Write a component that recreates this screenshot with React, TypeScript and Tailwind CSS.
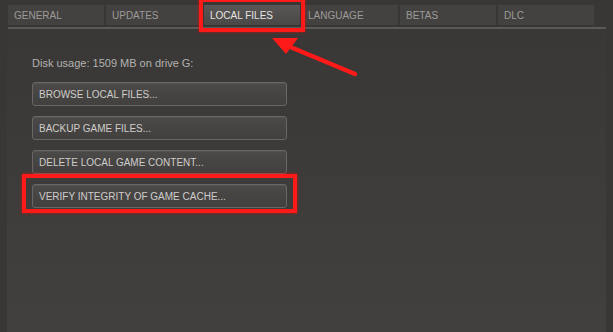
import React from "react";

const tabs = ["GENERAL", "UPDATES", "LOCAL FILES", "LANGUAGE", "BETAS", "DLC"];
const buttons = [
  "BROWSE LOCAL FILES...",
  "BACKUP GAME FILES...",
  "DELETE LOCAL GAME CONTENT...",
  "VERIFY INTEGRITY OF GAME CACHE...",
];

export default function App() {
  return (
    <div
      className="relative w-[613px] h-[332px] overflow-hidden bg-[#383735] text-[11px]"
      style={{ fontFamily: '"Liberation Sans", Arial, sans-serif' }}
    >
      <div className="flex flex-col h-full pt-[5px] pl-[8px] pr-[7px]">
        <div className="flex gap-[2px]">
          {tabs.map((t, i) => (
            <div
              key={t}
              className={
                "w-[96px] h-[20px] flex items-center pl-[6px] text-[10px] " +
                (i === 2
                  ? "bg-gradient-to-b from-[#5a5856] to-[#4a4846] text-[#e6e4e2]"
                  : "bg-[#444240] text-[#9c9a98]")
              }
            >
              {t}
            </div>
          ))}
        </div>
        <div className="h-[2px] mt-[2px] bg-[#5c5a58]" />
        <div className="flex-1 -ml-[1px] bg-gradient-to-b from-[#393836] to-[#41403e] flex flex-col pl-[25px] pt-[27px]">
          <div className="text-[#b4b2b0] h-[14px] leading-[14px]">Disk usage: 1509 MB on drive G:</div>
          <div className="flex flex-col gap-[10px] mt-[12px]">
            {buttons.map((b) => (
              <div
                key={b}
                className="w-[255px] h-[24px] rounded-[3px] border border-[#696765] bg-gradient-to-b from-[#4c4a48] to-[#42403e] flex items-center pl-[6px] text-[10px] text-[#cfcdcb] shadow-[inset_0_1px_0_rgba(255,255,255,0.05)]"
              >
                {b}
              </div>
            ))}
          </div>
        </div>
      </div>

      {/* red highlight around LOCAL FILES tab */}
      <div className="absolute left-[199px] top-[-2px] w-[106px] h-[34px] border-[4px] border-[#ff1a1a] shadow-[0_0_3px_rgba(255,0,0,0.6)]" />
      {/* red highlight around verify button */}
      <div className="absolute left-[22px] top-[174px] w-[275px] h-[39px] border-[4px] border-[#ff1a1a] shadow-[0_0_3px_rgba(255,0,0,0.6)]" />
      {/* arrow */}
      <svg className="absolute left-0 top-0" width="613" height="332" viewBox="0 0 613 332">
        <line x1="355" y1="74" x2="288" y2="46" stroke="#ff1a1a" strokeWidth="4.5" strokeLinecap="round" />
        <polygon points="272,38 298,38 286,54" fill="#ff1a1a" />
      </svg>
    </div>
  );
}
